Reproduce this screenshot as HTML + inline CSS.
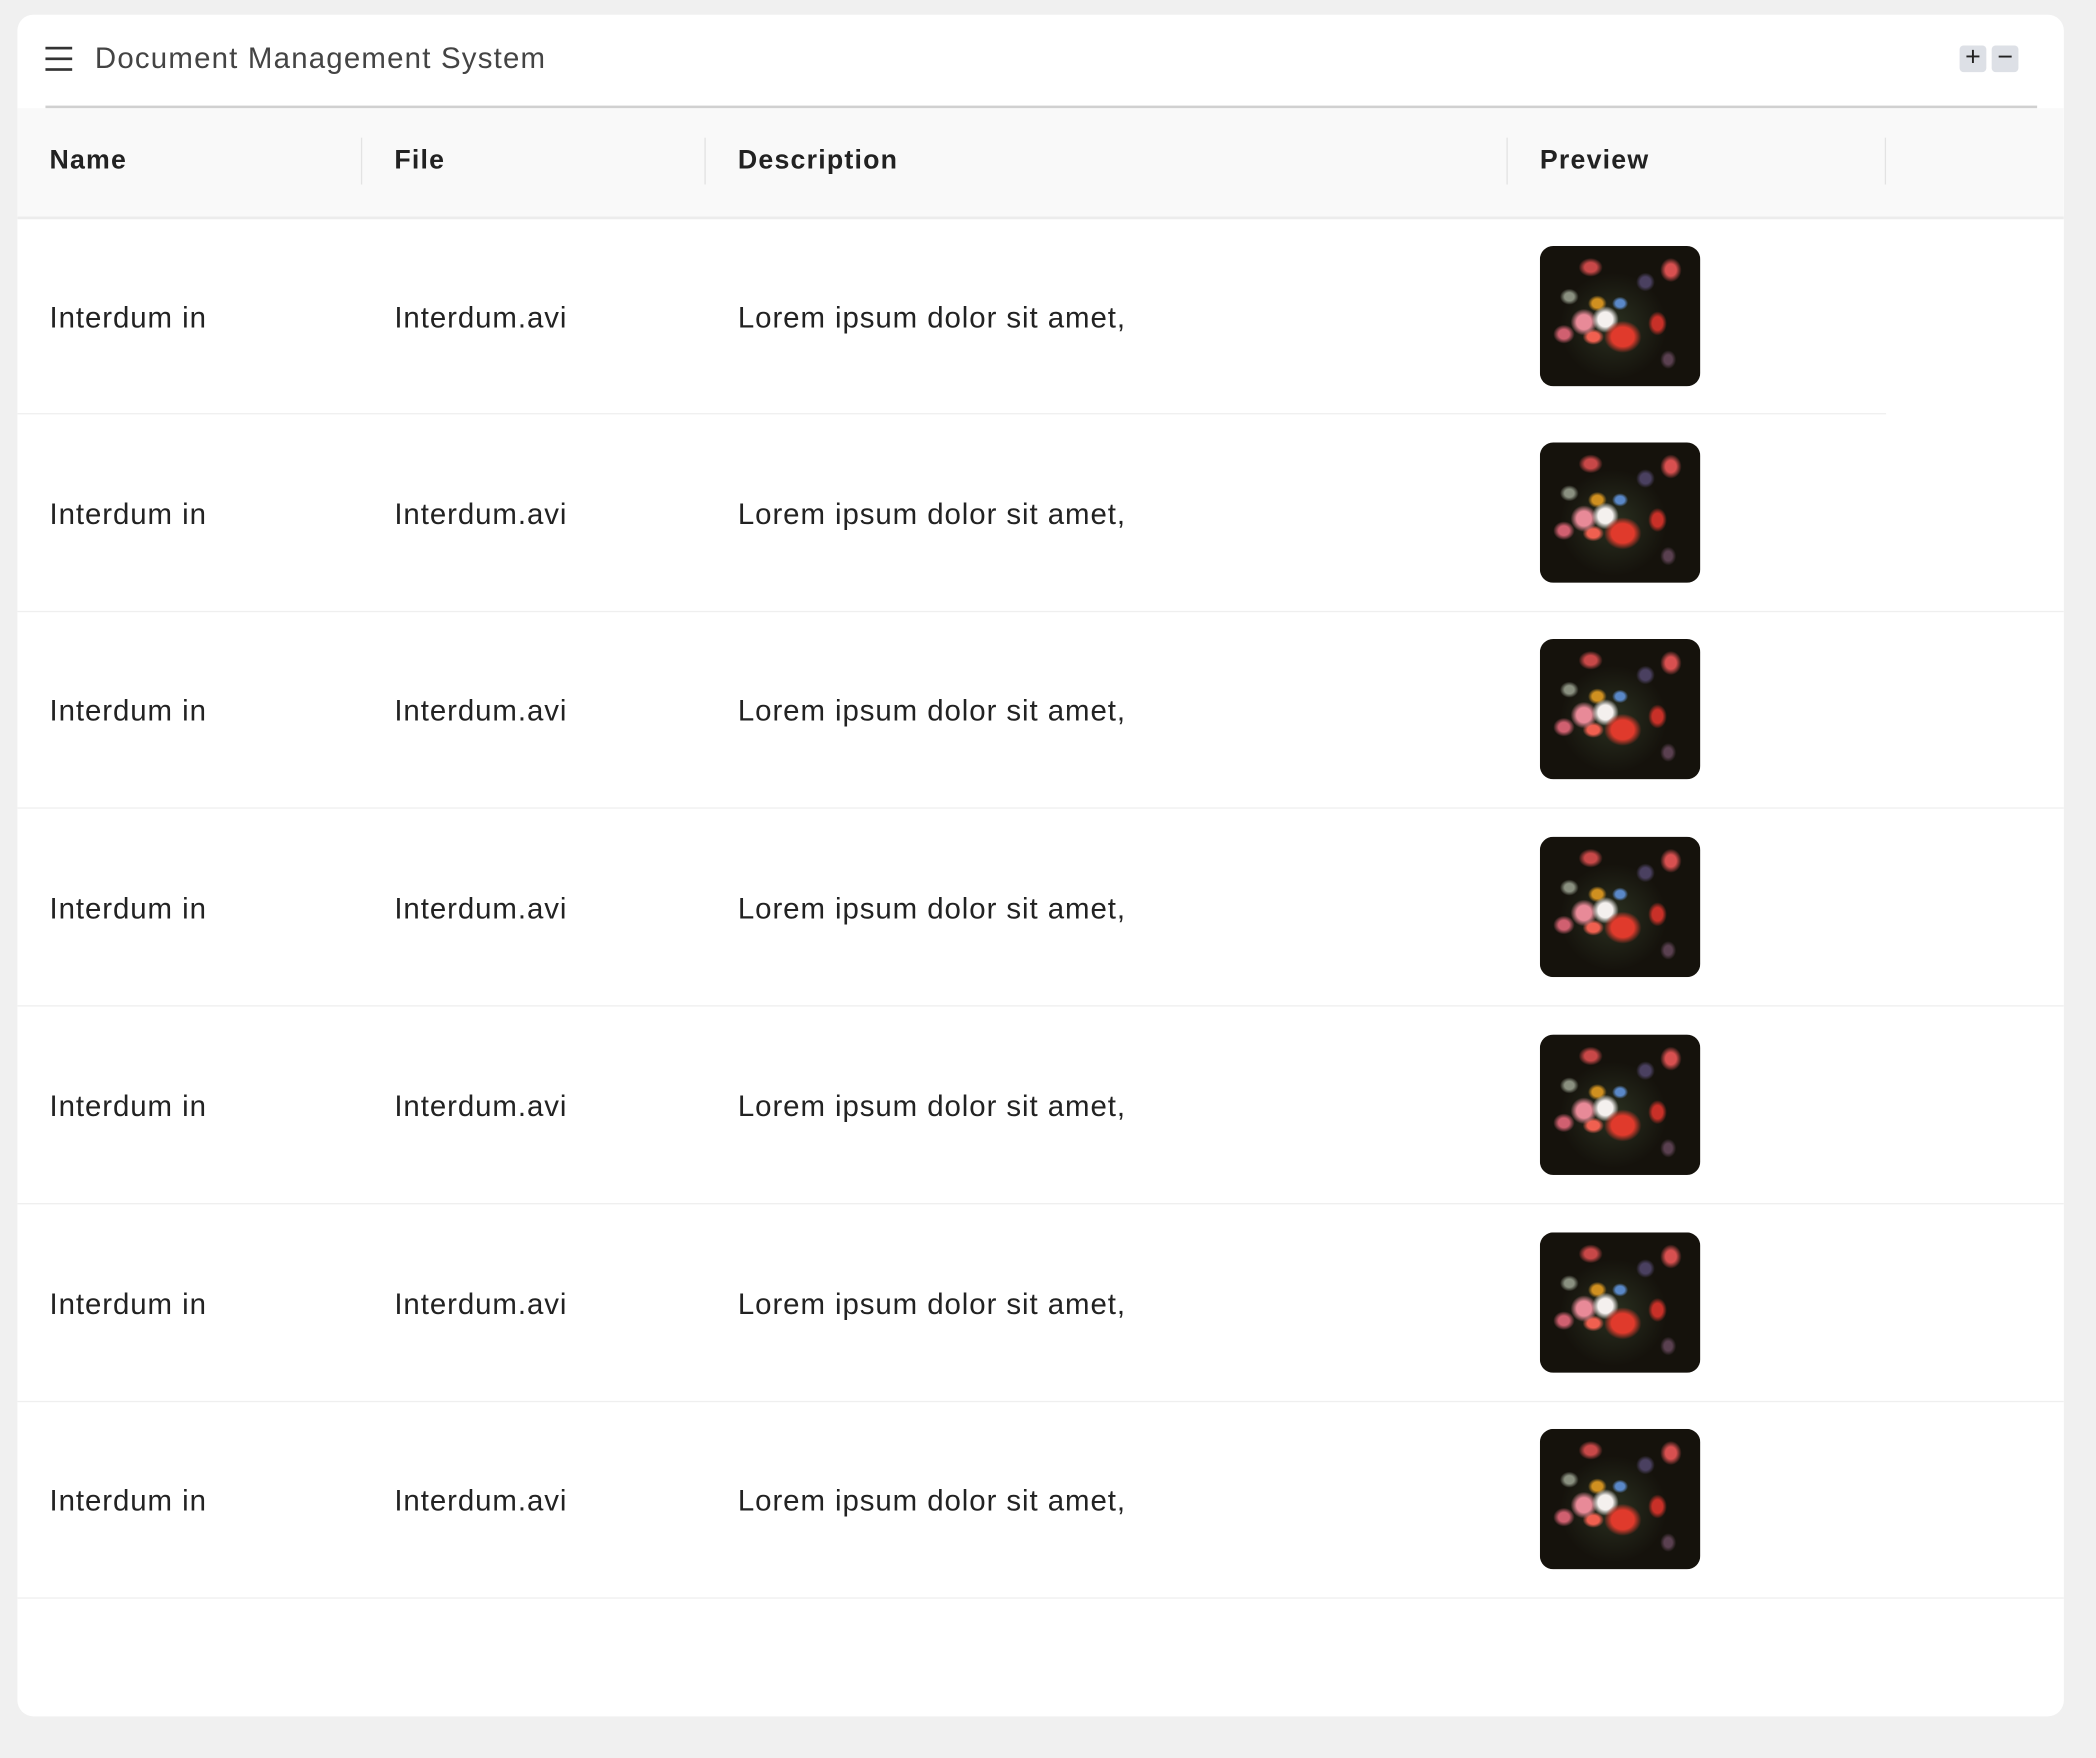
<!DOCTYPE html>
<html><head><meta charset="utf-8"><style>
html,body{margin:0;padding:0;width:2096px;height:1758px;overflow:hidden;background:#f0f0f0;}
#w{position:absolute;left:0;top:0;width:1568px;height:1315px;transform:scale(1.3367);transform-origin:0 0;font-family:"Liberation Sans",sans-serif;}
.card{position:absolute;left:13px;top:11px;width:1531px;height:1273px;background:#fff;border-radius:12px;overflow:hidden;}
.ham{position:absolute;left:21px;top:24px;width:20px;}
.ham i{display:block;height:2px;background:#333;margin-bottom:6px;}
.title{position:absolute;left:58px;top:20px;font-size:22px;color:#444;letter-spacing:.9px;}
.btn{position:absolute;top:23px;width:20px;height:20px;background:#dde0e6;border-radius:3px;color:#222;font-size:20px;line-height:19px;text-align:center;}
.hr{position:absolute;left:21px;top:68px;width:1490px;height:2px;background:#d0d0d0;}
.thead{position:absolute;left:0;top:70px;width:1531px;height:81px;background:#f9f9f9;border-bottom:2px solid #ececec;}
.th{position:absolute;top:28px;font-size:20px;font-weight:bold;color:#222;letter-spacing:.9px;}
.sep{position:absolute;top:22px;width:1px;height:35px;background:#e3e3e3;}
.row{position:absolute;left:0;width:1531px;height:147px;border-bottom:1.5px solid #efefef;}
.td{position:absolute;top:62px;font-size:22px;color:#222;letter-spacing:.7px;}
.img{position:absolute;left:1139px;top:21px;width:120px;height:105px;border-radius:10px;
background:
radial-gradient(ellipse 14px 12px at 62px 68px,#e03a2c 60%,transparent 100%),
radial-gradient(ellipse 10px 10px at 49px 55px,#f4f0ee 55%,transparent 100%),
radial-gradient(ellipse 10px 10px at 33px 57px,#e88a98 55%,transparent 100%),
radial-gradient(ellipse 8px 6px at 40px 68px,#f06050 55%,transparent 100%),
radial-gradient(ellipse 7px 6px at 43px 43px,#d09020 55%,transparent 100%),
radial-gradient(ellipse 6px 5px at 60px 43px,#5a88c8 55%,transparent 100%),
radial-gradient(ellipse 7px 9px at 88px 58px,#c83028 55%,transparent 100%),
radial-gradient(ellipse 8px 9px at 98px 18px,#d85050 50%,transparent 100%),
radial-gradient(ellipse 9px 7px at 38px 16px,#c84848 50%,transparent 100%),
radial-gradient(ellipse 8px 7px at 18px 66px,#d06070 50%,transparent 100%),
radial-gradient(ellipse 7px 7px at 79px 27px,#4a4060 55%,transparent 100%),
radial-gradient(ellipse 7px 6px at 22px 38px,#8a9080 50%,transparent 100%),
radial-gradient(ellipse 6px 7px at 96px 85px,#5a4050 50%,transparent 100%),
radial-gradient(ellipse 40px 40px at 55px 60px,#2a3020 0%,transparent 100%),
#15120c;}
</style></head><body><div id="w">
<div class="card">
<div class="ham"><i></i><i></i><i></i></div>
<div class="title">Document Management System</div>
<div class="btn" style="left:1453px">+</div>
<div class="btn" style="left:1477px">−</div>
<div class="hr"></div>
<div class="thead">
<div class="th" style="left:24px">Name</div>
<div class="sep" style="left:257px"></div>
<div class="th" style="left:282px">File</div>
<div class="sep" style="left:514px"></div>
<div class="th" style="left:539px">Description</div>
<div class="sep" style="left:1114px"></div>
<div class="th" style="left:1139px">Preview</div>
<div class="sep" style="left:1397px"></div>
</div>

<div class="row" style="top:152px;border-bottom:none"><div style="position:absolute;left:0;bottom:0;width:1398px;height:1.5px;background:#efefef"></div><div class="td" style="left:24px">Interdum in</div><div class="td" style="left:282px">Interdum.avi</div><div class="td" style="left:539px">Lorem ipsum dolor sit amet,</div><div class="img"></div></div>
<div class="row" style="top:299px"><div class="td" style="left:24px">Interdum in</div><div class="td" style="left:282px">Interdum.avi</div><div class="td" style="left:539px">Lorem ipsum dolor sit amet,</div><div class="img"></div></div>
<div class="row" style="top:446px"><div class="td" style="left:24px">Interdum in</div><div class="td" style="left:282px">Interdum.avi</div><div class="td" style="left:539px">Lorem ipsum dolor sit amet,</div><div class="img"></div></div>
<div class="row" style="top:594px"><div class="td" style="left:24px">Interdum in</div><div class="td" style="left:282px">Interdum.avi</div><div class="td" style="left:539px">Lorem ipsum dolor sit amet,</div><div class="img"></div></div>
<div class="row" style="top:742px"><div class="td" style="left:24px">Interdum in</div><div class="td" style="left:282px">Interdum.avi</div><div class="td" style="left:539px">Lorem ipsum dolor sit amet,</div><div class="img"></div></div>
<div class="row" style="top:890px"><div class="td" style="left:24px">Interdum in</div><div class="td" style="left:282px">Interdum.avi</div><div class="td" style="left:539px">Lorem ipsum dolor sit amet,</div><div class="img"></div></div>
<div class="row" style="top:1037px"><div class="td" style="left:24px">Interdum in</div><div class="td" style="left:282px">Interdum.avi</div><div class="td" style="left:539px">Lorem ipsum dolor sit amet,</div><div class="img"></div></div>
</div>
</div></body></html>
